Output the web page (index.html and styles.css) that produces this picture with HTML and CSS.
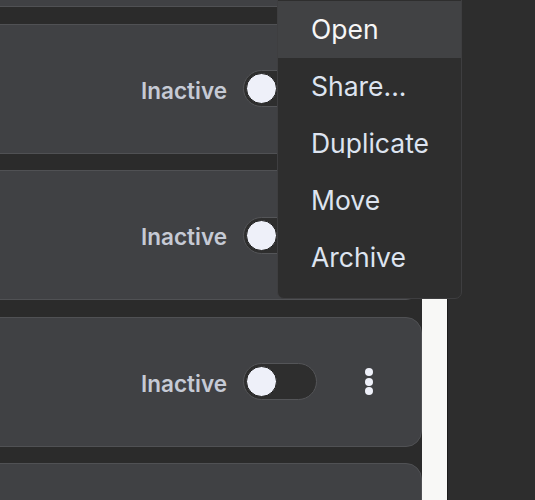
FILE: index.html
```html
<!DOCTYPE html>
<html lang="en">
<head>
    <meta charset="UTF-8">
    <meta name="viewport" content="width=device-width, initial-scale=1.0">
    <title>Automations</title>
    <link rel="stylesheet" href="styles.css">
</head>
<body>
    <div class="layout">
        <div class="list">
            <!-- cards scrolled above / below the view -->
            <div class="card"></div>
            <div class="card">
                <span class="status">Inactive</span>
                <span class="toggle"><span class="knob"></span></span>
                <button class="more"><i></i><i></i><i></i></button>
            </div>
            <div class="card">
                <span class="status">Inactive</span>
                <span class="toggle"><span class="knob"></span></span>
                <button class="more"><i></i><i></i><i></i></button>
            </div>
            <div class="card">
                <span class="status">Inactive</span>
                <span class="toggle"><span class="knob"></span></span>
                <button class="more"><i></i><i></i><i></i></button>
            </div>
            <div class="card"></div>

            <!-- context menu for the first card -->
            <ul class="menu">
                <li class="active">Open</li>
                <li>Share...</li>
                <li>Duplicate</li>
                <li>Move</li>
                <li>Archive</li>
            </ul>
        </div>
        <div class="strip"></div>
        <div class="side"></div>
    </div>
</body>
</html>
```

FILE: styles.css
```css
body {
    margin: 0;
    padding: 0;
    background: #2d2d2d;
    font-family: Inter, "Noto Sans", sans-serif;
    overflow: hidden;
}
.layout {
    display: flex;
    height: 500px;
    overflow: hidden;
}

/* list of cards */
.list {
    position: relative;
    width: 422px;
    flex: none;
    background: #2b2b2b;
}
.list .card:first-child {
    margin-top: -123px;
}
.card {
    display: flex;
    align-items: center;
    justify-content: flex-end;
    height: 130px;
    box-sizing: border-box;
    margin: 0 0 16.5px -20px;
    padding-right: 32px;
    background: #404144;
    border: 1px solid #505154;
    border-radius: 16px;
}
.status {
    font-size: 22.5px;
    font-weight: 600;
    color: #c6cad5;
    margin-right: 16px;
    padding-top: 3px;
}
.toggle {
    display: flex;
    align-items: center;
    width: 74px;
    height: 37px;
    box-sizing: border-box;
    padding-left: 2px;
    background: #2e2e2e;
    border: 1px solid #545558;
    border-radius: 19px;
}
.knob {
    width: 31px;
    height: 31px;
    box-sizing: border-box;
    border-radius: 50%;
    background: #eef0f9;
    border: 1px solid #222;
}
.more {
    display: flex;
    flex-direction: column;
    align-items: center;
    gap: 1.5px;
    width: 40px;
    margin-left: 32px;
    padding: 0;
    background: none;
    border: none;
}
.more i {
    width: 8px;
    height: 8px;
    border-radius: 50%;
    background: #eef0f9;
}

/* dropdown menu */
.menu {
    position: absolute;
    top: -12px;
    left: 277px;
    width: 185px;
    box-sizing: border-box;
    margin: 0;
    padding: 12px 0;
    list-style: none;
    background: #2e2e2e;
    border: 1px solid #3e3e40;
    border-radius: 7px;
    z-index: 2;
}
.menu li {
    height: 57px;
    line-height: 57px;
    padding-left: 33px;
    font-size: 26.5px;
    color: #dde4f0;
}
.menu li.active {
    background: #414244;
    color: #f6f6f6;
}

.strip {
    width: 25px;
    flex: none;
    background: #f8f8f6;
    border-right: 1px solid #1c1c1c;
}
.side {
    flex: 1;
    background: #2d2d2d;
}
```
